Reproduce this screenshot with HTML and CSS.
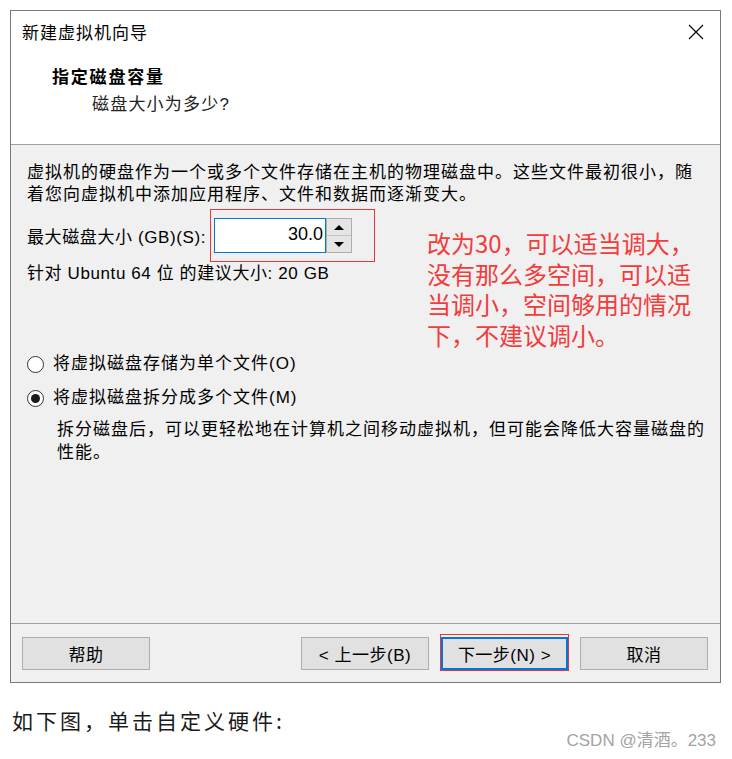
FILE: index.html
```html
<!DOCTYPE html>
<html lang="zh-CN">
<head>
    <meta charset="UTF-8">
    <title>新建虚拟机向导</title>
    <link rel="stylesheet" href="styles.css">
</head>
<body>
    <div class="dialog">
        <!-- title bar -->
        <div class="titlebar">
            <span class="title">新建虚拟机向导</span>
            <svg class="close" width="16" height="16" viewBox="0 0 16 16">
                <path d="M1 1 L15 15 M15 1 L1 15" stroke="#000" stroke-width="1.1" fill="none"/>
            </svg>
        </div>

        <div class="header">
            <h2>指定磁盘容量</h2>
            <p class="sub">磁盘大小为多少?</p>
        </div>

        <div class="panel">
            <p class="intro">虚拟机的硬盘作为一个或多个文件存储在主机的物理磁盘中。这些文件最初很小，随<br>着您向虚拟机中添加应用程序、文件和数据而逐渐变大。</p>

            <div class="size-row">
                <label class="size-label">最大磁盘大小 (GB)(S):</label>
                <div class="spin-wrap">
                    <div class="spin-input">30.0</div>
                    <div class="spin-btns">
                        <div class="spin-btn"><span class="arrow-up"></span></div>
                        <div class="spin-btn"><span class="arrow-down"></span></div>
                    </div>
                </div>
            </div>

            <p class="recommend">针对 Ubuntu 64 位 的建议大小: 20 GB</p>

            <div class="radios">
                <div class="radio-row">
                    <span class="radio"></span>
                    <span>将虚拟磁盘存储为单个文件(O)</span>
                </div>
                <div class="radio-row">
                    <span class="radio checked"></span>
                    <span>将虚拟磁盘拆分成多个文件(M)</span>
                </div>
                <p class="split-desc">拆分磁盘后，可以更轻松地在计算机之间移动虚拟机，但可能会降低大容量磁盘的<br>性能。</p>
            </div>

            <!-- red note drawn on top of the screenshot -->
            <div class="note">改为30，可以适当调大，<br>没有那么多空间，可以适<br>当调小，空间够用的情况<br>下，不建议调小。</div>
        </div>

        <div class="footer">
            <button class="btn">帮助</button>
            <div class="nav-btns">
                <button class="btn">&lt; 上一步(B)</button>
                <button class="btn btn-next">下一步(N) &gt;</button>
                <button class="btn">取消</button>
            </div>
        </div>
    </div>

    <p class="caption">如下图，单击自定义硬件:</p>
    <div class="watermark">CSDN @清酒。233</div>
</body>
</html>
```

FILE: styles.css
```css
body {
    margin: 0;
    padding: 10px 0 0 0;
    background-color: #fff;
    font-family: "Liberation Sans", "Noto Sans CJK SC", sans-serif;
    color: #000;
    position: relative;
    min-height: 749px;
}

p {
    margin: 0;
}

.dialog {
    margin: 0 0 0 10px;
    width: 709px;
    border: 1px solid #7a7a7a;
    background-color: #fff;
}

.titlebar {
    height: 44px;
    display: flex;
    align-items: center;
    justify-content: space-between;
    padding: 0 16px 0 11px;
}

.title {
    font-size: 17px;
    letter-spacing: 1px;
    margin-top: -3px;
}

.close {
    display: block;
    margin-top: -2px;
}

.header {
    height: 90px;
    box-sizing: border-box;
    padding: 11px 0 0 41px;
    border-bottom: 1px solid #a0a0a0;
}

.header h2 {
    margin: 0;
    font-size: 17px;
    line-height: 24px;
    font-weight: bold;
    letter-spacing: 1.8px;
}

.header .sub {
    margin-top: 3px;
    padding-left: 40px;
    font-size: 17px;
    line-height: 24px;
    letter-spacing: 1.2px;
    color: #222;
}

.panel {
    position: relative;
    height: 478px;
    box-sizing: border-box;
    background-color: #f0f0f0;
    padding: 17px 16px 0 16px;
    font-size: 17px;
    letter-spacing: 1px;
    white-space: nowrap;
}

.intro {
    line-height: 22px;
}

.size-row {
    display: flex;
    align-items: center;
    margin-top: 3px;
}

.size-label {
    width: 183px;
    letter-spacing: 0.6px;
}

.spin-wrap {
    display: flex;
    border: 1px solid #e8363c;
    padding: 8px 22px 8px 3px;
}

.spin-input {
    width: 112px;
    height: 35px;
    box-sizing: border-box;
    border: 1px solid #0078d7;
    background-color: #fff;
    text-align: right;
    font-size: 18px;
    line-height: 31px;
    padding-right: 2px;
    letter-spacing: 0;
}

.spin-btns {
    display: flex;
    flex-direction: column;
    width: 26px;
    height: 35px;
    box-sizing: border-box;
    border: 1px solid #adadad;
    background-color: #e5e5e5;
}

.spin-btn {
    flex: 1;
    display: flex;
    align-items: center;
    justify-content: center;
}

.spin-btn + .spin-btn {
    border-top: 1px solid #c4c4c4;
}

.arrow-up {
    width: 0;
    height: 0;
    border-left: 5px solid transparent;
    border-right: 5px solid transparent;
    border-bottom: 5px solid #000;
}

.arrow-down {
    width: 0;
    height: 0;
    border-left: 5px solid transparent;
    border-right: 5px solid transparent;
    border-top: 5px solid #000;
}

.recommend {
    line-height: 22px;
    margin-top: 1px;
    letter-spacing: 0.6px;
}

.radios {
    margin-top: 68px;
}

.radio-row {
    display: flex;
    align-items: center;
    line-height: 22px;
}

.radio-row + .radio-row {
    margin-top: 12px;
}

.radio {
    width: 17px;
    height: 17px;
    box-sizing: border-box;
    border: 1px solid #333;
    border-radius: 50%;
    background-color: #fff;
    margin-right: 9px;
    display: flex;
    align-items: center;
    justify-content: center;
}

.radio.checked::after {
    content: "";
    width: 9px;
    height: 9px;
    border-radius: 50%;
    background-color: #1a1a1a;
}

.split-desc {
    margin-top: 9px;
    padding-left: 30px;
    line-height: 23px;
}

.note {
    position: absolute;
    left: 416px;
    top: 83px;
    font-family: "Noto Sans CJK SC", sans-serif;
    font-size: 24px;
    line-height: 30.5px;
    letter-spacing: 0;
    color: #f23c3c;
}

.footer {
    height: 59px;
    box-sizing: border-box;
    border-top: 1px solid #a0a0a0;
    background-color: #f0f0f0;
    padding: 13px 12px 0 11px;
    display: flex;
    justify-content: space-between;
    align-items: flex-start;
}

.nav-btns {
    display: flex;
    gap: 12px;
}

.btn {
    width: 128px;
    height: 33px;
    box-sizing: border-box;
    border: 1px solid #adadad;
    background-color: #e1e1e1;
    font-family: "Liberation Sans", "Noto Sans CJK SC", sans-serif;
    font-size: 17px;
    color: #000;
    padding: 0;
    letter-spacing: 0.5px;
}

.btn-next {
    position: relative;
    width: 127px;
    border: 2px solid #0078d7;
}

.btn-next::after {
    content: "";
    position: absolute;
    left: -3px;
    right: -3px;
    top: -5px;
    bottom: -3px;
    border: 1px solid #e8363c;
}

.caption {
    margin: 22px 0 0 12px;
    font-family: "Noto Sans CJK SC", sans-serif;
    font-size: 21px;
    line-height: 30px;
    letter-spacing: 3px;
    color: #1a1a1a;
}

.watermark {
    position: absolute;
    right: 16px;
    top: 730px;
    font-size: 17px;
    line-height: 22px;
    color: #a3a3a3;
}
```
